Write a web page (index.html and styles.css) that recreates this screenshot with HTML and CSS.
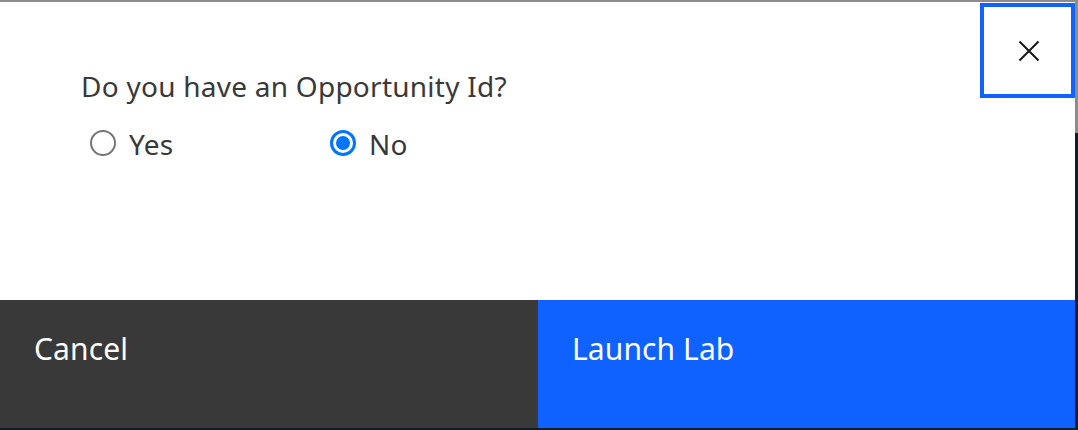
FILE: index.html
```html
<!DOCTYPE html>
<html lang="en">
<head>
<meta charset="utf-8">
<title>Launch Lab</title>
<link rel="stylesheet" href="styles.css">
</head>
<body>
<div class="stage">
  <div class="modal" role="dialog" aria-label="Launch Lab">
    <div class="modal-top">
      <div class="modal-body">
        <div class="label">Do you have an Opportunity Id?</div>
        <div class="radio-group">
          <label class="radio"><span class="dot"></span><span class="rtext">Yes</span></label>
          <label class="radio"><span class="dot checked"></span><span class="rtext">No</span></label>
        </div>
      </div>
      <button class="close" aria-label="Close">
        <svg width="22" height="22" viewBox="0 0 22 22" aria-hidden="true">
          <path d="M1.5 1.5 L20.5 20.5 M20.5 1.5 L1.5 20.5" stroke="#161616" stroke-width="2" fill="none"/>
        </svg>
      </button>
    </div>
    <div class="footer">
      <button class="btn btn-secondary">Cancel</button>
      <button class="btn btn-primary">Launch Lab</button>
    </div>
  </div>
  <div class="edge"></div>
</div>
</body>
</html>
```
FILE: styles.css
```css
html, body {
  margin: 0;
  padding: 0;
}
body {
  width: 1078px;
  height: 430px;
  overflow: hidden;
  background: #0f1e2b;
  font-family: "Noto Sans", "Liberation Sans", sans-serif;
}
.stage {
  display: flex;
  border-top: 2px solid #8c8c8c;
}
.edge {
  flex: none;
  width: 3px;
  height: 428px;
  background: linear-gradient(#8c8c8c 0 131px, #0f1e2b 131px);
}
.modal {
  flex: none;
  width: 1075px;
  height: 426px;
  display: flex;
  flex-direction: column;
  background: #ffffff;
}
.modal-top {
  display: flex;
  height: 298px;
}
.modal-body {
  flex: 1;
  padding: 66px 0 0 81px;
}
.label {
  font-size: 28px;
  line-height: 36px;
  color: #393939;
  letter-spacing: 0.25px;
}
.radio-group {
  display: flex;
  margin-top: 22px;
  height: 36px;
}
.radio {
  display: flex;
  align-items: flex-start;
  width: 240px;
  margin-left: 9px;
}
.radio + .radio {
  margin-left: 0;
}
.dot {
  box-sizing: border-box;
  width: 26px;
  height: 26px;
  margin-top: 4px;
  border-radius: 50%;
  border: 2px solid #767676;
  background: #fff;
  position: relative;
}
.dot.checked {
  border: 3px solid #0075ff;
}
.dot.checked::after {
  content: "";
  position: absolute;
  left: 3px;
  top: 3px;
  width: 14px;
  height: 14px;
  border-radius: 50%;
  background: #0075ff;
}
.rtext {
  margin-left: 13px;
  font-size: 28px;
  line-height: 36px;
  color: #393939;
  letter-spacing: 0.3px;
}
.close {
  box-sizing: border-box;
  flex: none;
  width: 95px;
  height: 95px;
  margin-top: 1px;
  border: 4px solid #0f62fe;
  background: #fff;
  padding: 0 0 0 2px;
  display: flex;
  align-items: center;
  justify-content: center;
}
.footer {
  display: flex;
  height: 128px;
}
.btn {
  border: 0;
  margin: 0;
  font-family: inherit;
  font-size: 30px;
  line-height: 36px;
  color: #ffffff;
  text-align: left;
  display: flex;
  align-items: flex-start;
  padding: 31px 0 0 34px;
  letter-spacing: 0.1px;
}
.btn-secondary {
  width: 538px;
  background: #393939;
}
.btn-primary {
  flex: 1;
  background: #0f62fe;
}
```
